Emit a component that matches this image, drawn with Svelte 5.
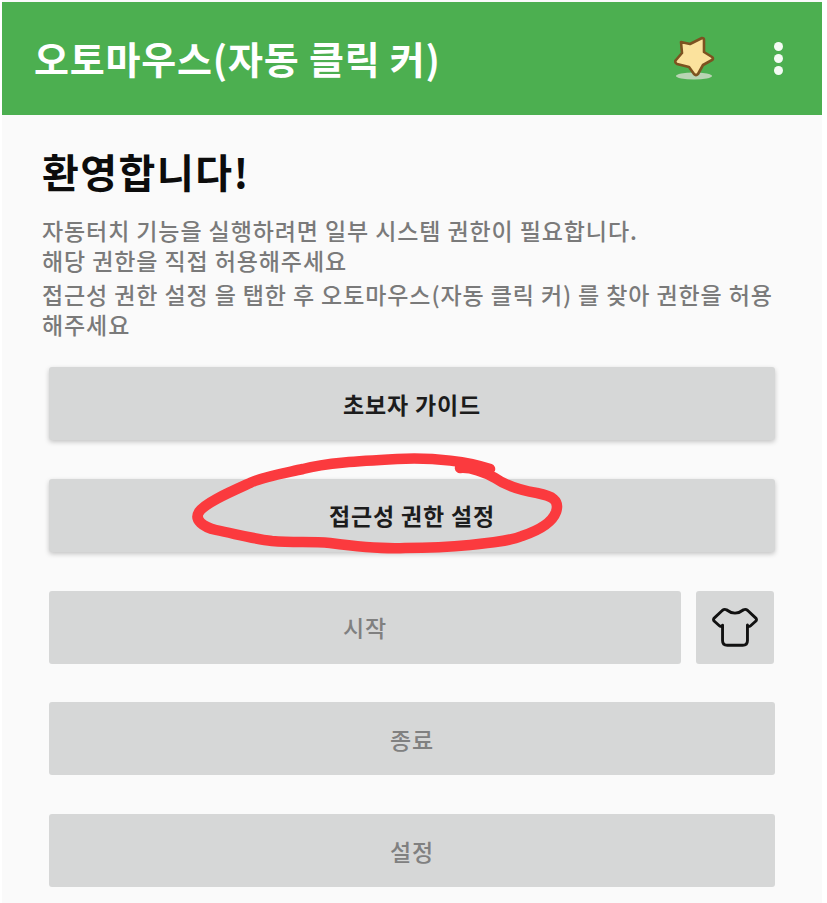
<script>
  let rows = [
    { label: "초보자 가이드", raised: true },
    { label: "접근성 권한 설정", raised: true },
    { label: "시작", shirt: true },
    { label: "종료" },
    { label: "설정" }
  ];
</script>

<style>
  :global(body) {
    margin: 0;
    background: #fff;
  }
  .screen {
    position: relative;
    width: 820px;
    height: 903px;
    margin-left: 2px;
    padding-top: 2px;
    box-sizing: border-box;
    background: #fafafa;
    font-family: "Noto Sans CJK KR", "Noto Sans", sans-serif;
  }
  header {
    height: 113px;
    background: #4caf50;
    display: flex;
    align-items: center;
    padding: 0 39px 0 32px;
    color: #fff;
  }
  .title {
    flex: 1;
    font-size: 38px;
    font-weight: 700;
    letter-spacing: 0.8px;
    padding-bottom: 3px;
  }
  .star {
    width: 46px;
    height: 46px;
    margin-right: 54px;
  }
  .dots {
    width: 10px;
    display: flex;
    flex-direction: column;
    align-items: center;
    gap: 3px;
  }
  .dots i {
    width: 9px;
    height: 9px;
    border-radius: 50%;
    background: #f4fbf4;
  }
  main {
    padding: 0 47px 0 40px;
  }
  h1 {
    margin: 32px 0 0;
    font-size: 40px;
    line-height: 48px;
    font-weight: 700;
    letter-spacing: 1.5px;
    color: #0c0c0c;
  }
  .intro {
    margin: 0;
    font-size: 23px;
    line-height: 30px;
    letter-spacing: 0.9px;
    font-weight: 500;
    color: #7a7a7a;
  }
  .first {
    margin-top: 20px;
  }
  .second {
    margin-top: 4px;
  }
  .buttons {
    margin: 28px 0 0 7px;
    display: flex;
    flex-direction: column;
    gap: 38.75px;
  }
  .row {
    display: flex;
    gap: 15px;
    height: 73px;
  }
  .with-shirt {
    padding-right: 1px;
  }
  .btn {
    flex: 1;
    display: flex;
    align-items: center;
    justify-content: center;
    background: #d6d7d7;
    border-radius: 3px;
    font-size: 23px;
    font-weight: 500;
    letter-spacing: 0.8px;
    color: #808080;
  }
  .raised {
    color: #1c1c1c;
    font-weight: 700;
    box-shadow: 0 2px 5px rgba(0, 0, 0, 0.22);
  }
  .shirt {
    flex: 0 0 78px;
  }
  .shirt svg {
    width: 46px;
    height: 46px;
  }
  .scribble {
    position: absolute;
    left: -2px;
    top: 0;
    width: 827px;
    height: 903px;
    pointer-events: none;
  }
</style>

<div class="screen">
  <header>
    <div class="title">오토마우스(자동 클릭 커)</div>
    <svg class="star" viewBox="0 0 46 46">
      <ellipse cx="21" cy="40" rx="18" ry="3.500" fill="#b9d4b4" />
      <path
        d="M8 6 L17 8 L29 2 Q31 2 31 4 L31 16 L39 21 Q41 23 39 24 L30 29 L25 38 Q23 40 21 38 L16 31 L4 28 Q1 26 3 24 L9 17 Z"
        fill="#fbe29d"
        stroke="#7d5220"
        stroke-width="2.600"
        stroke-linejoin="round" />
    </svg>
    <div class="dots"><i></i><i></i><i></i></div>
  </header>

  <main>
    <h1>환영합니다!</h1>
    <p class="intro first">
      자동터치 기능을 실행하려면 일부 시스템 권한이 필요합니다.<br />
      해당 권한을 직접 허용해주세요
    </p>
    <p class="intro second">
      접근성 권한 설정 을 탭한 후 오토마우스(자동 클릭 커) 를 찾아 권한을 허용<br />
      해주세요
    </p>

    <div class="buttons">
      {#each rows as row}
        <div class="row" class:with-shirt={row.shirt}>
          <div class="btn" class:raised={row.raised}>{row.label}</div>
          {#if row.shirt}
            <div class="btn shirt">
              <svg viewBox="0 0 48 48" fill="none" stroke="#111" stroke-width="3" stroke-linejoin="round">
                <path d="M15 6 Q24 13 33 6 Q35 5 37 6.500 L46 15 Q47 17 45.500 18 L40 23 Q38 24 37 22 V38 Q37 43 32 43 H16 Q11 43 11 38 V22 Q10 24 8 23 L2.500 18 Q1 17 2 15 L11 6.500 Q13 5 15 6 Z" />
              </svg>
            </div>
          {/if}
        </div>
      {/each}
    </div>
  </main>

  <svg class="scribble" viewBox="0 0 827 903" fill="none">
    <path
      d="M490 469 C470 462 435 457 397 459 C360 461 325 463 303 469 C280 474 262 477 250 483 C228 493 205 503 199 512 C194 520 203 527 216 530 C240 535 255 539 272 541 C295 543 310 541 330 543 C360 547 385 549 405 548 C430 548 450 547 470 545 C490 543 510 541 522 536 C540 530 552 523 556 512 C560 500 552 496 537 493 C518 490 505 485 495 478 C485 472 470 467 460 468"
      stroke="#fb3a3e"
      stroke-width="10.500"
      stroke-linecap="round"
      stroke-linejoin="round" />
  </svg>
</div>
